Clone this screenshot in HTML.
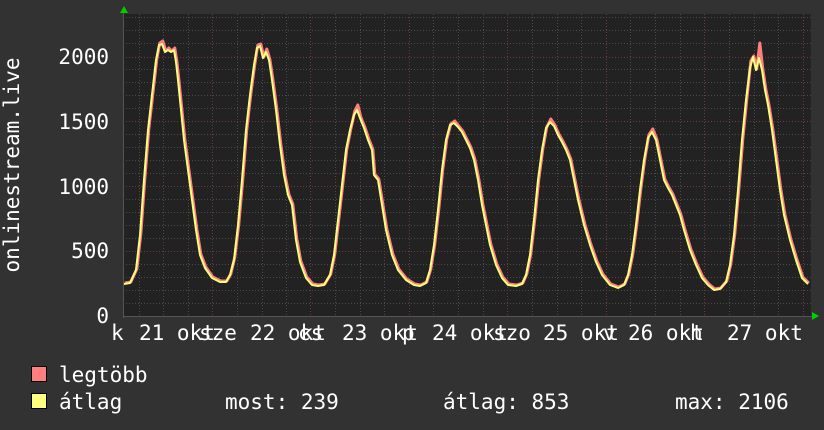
<!DOCTYPE html>
<html><head><meta charset="utf-8"><style>
html,body{margin:0;padding:0;background:#323232;}
svg{display:block}
text{font-family:"DejaVu Sans Mono","Liberation Mono",monospace;fill:#fff;font-size:21px}
</style></head><body>
<svg width="824" height="430" viewBox="0 0 824 430" xmlns="http://www.w3.org/2000/svg">
<rect x="0" y="0" width="824" height="430" fill="#323232"/>
<rect x="123" y="14" width="688" height="303" fill="#222222"/>
<g stroke-width="1" stroke-dasharray="1,2" fill="none">
<g stroke="#4a4a4a">
<path d="M123 303.5H811M123 290.5H811M123 277.5H811M123 264.5H811M123 238.5H811M123 225.5H811M123 212.5H811M123 199.5H811M123 173.5H811M123 160.5H811M123 147.5H811M123 134.5H811M123 108.5H811M123 95.5H811M123 82.5H811M123 69.5H811M123 43.5H811M123 30.5H811M123 17.5H811"/>
<path d="M139.5 14V317M163.5 14V317M188.5 14V317M237.5 14V317M262.5 14V317M286.5 14V317M335.5 14V317M360.5 14V317M384.5 14V317M433.5 14V317M458.5 14V317M483.5 14V317M532.5 14V317M557.5 14V317M581.5 14V317M630.5 14V317M655.5 14V317M680.5 14V317M729.5 14V317M754.5 14V317M778.5 14V317"/>
</g>
<g stroke="#6e3a3a">
<path d="M123 251.5H811M123 186.5H811M123 121.5H811M123 57.5H811"/>
<path d="M212.5 14V317M310.5 14V317M409.5 14V317M507.5 14V317M606.5 14V317M704.5 14V317M803.5 14V317"/>
</g>
</g>
<line x1="123" y1="316.5" x2="812" y2="316.5" stroke="#555"/>
<line x1="123.5" y1="12" x2="123.5" y2="318" stroke="#555"/>
<polygon points="120,13 124,6 128,13" fill="#00cc00"/>
<polygon points="812,312 819,316 812,320" fill="#00cc00"/>
<polyline fill="none" stroke="#ff7f7f" stroke-width="3" stroke-linejoin="round" transform="translate(0.8,-1)" points="124,284 130,283 136,270 140,235 144,180 148,130 152,95 156,60 159,44 162,42 165,52 168,49 171,52 174,49 176,62 178,80 181,110 184,140 188,170 192,200 196,230 200,255 205,268 212,278 220,282 226,282 230,275 234,258 238,225 242,180 246,130 250,95 254,65 257,46 260,45 263,58 266,50 269,60 272,80 276,110 280,145 284,175 288,195 292,205 296,240 300,262 306,278 312,285 318,286 324,285 330,275 334,255 338,220 342,185 346,150 350,130 354,112 357,106 360,118 364,128 368,140 372,150 374,175 378,180 382,205 386,230 392,255 398,270 406,280 414,285 420,286 426,283 430,270 434,245 438,210 442,170 446,140 450,125 454,122 458,127 462,132 466,140 470,148 474,160 478,180 482,205 486,225 490,245 496,265 502,278 508,285 516,286 522,284 526,275 530,255 534,220 538,180 542,150 546,128 550,120 554,126 558,135 562,142 566,150 570,160 574,180 578,200 584,225 590,245 596,262 602,275 610,285 618,288 624,285 628,275 632,255 636,225 640,190 644,160 648,136 652,130 656,140 660,160 664,180 668,188 672,195 676,205 680,215 684,230 690,250 696,265 702,278 708,285 714,290 720,289 726,282 730,265 734,235 738,190 742,140 746,100 750,62 753,57 756,70 759,44 762,70 765,90 768,105 772,130 776,160 780,190 784,215 790,240 796,260 802,278 808,284"/>
<polyline fill="none" stroke="#ffff7f" stroke-width="2" stroke-linejoin="round" points="124,284 130,283 136,270 140,235 144,180 148,130 152,95 156,60 159,45 162,44 165,52 168,50 171,52 174,50 176,62 178,80 181,110 184,140 188,170 192,200 196,230 200,255 205,268 212,278 220,282 226,282 230,275 234,260 238,225 242,180 246,130 250,95 254,65 257,48 260,46 263,58 266,52 269,60 272,80 276,110 280,145 284,175 288,195 292,205 296,240 300,262 306,278 312,285 318,286 324,285 330,275 334,255 338,220 342,185 346,150 350,130 354,115 357,110 360,118 364,128 368,140 372,150 374,175 378,180 382,205 386,230 392,255 398,270 406,280 414,285 420,286 426,283 430,270 434,245 438,210 442,170 446,140 450,125 454,123 458,127 462,132 466,140 470,148 474,160 478,180 482,205 486,225 490,245 496,265 502,278 508,285 516,286 522,284 526,275 530,255 534,220 538,180 542,150 546,128 550,122 554,126 558,135 562,142 566,150 570,160 574,180 578,200 584,225 590,245 596,262 602,275 610,285 618,288 624,285 628,275 632,255 636,225 640,190 644,160 648,138 652,132 656,140 660,160 664,180 668,188 672,195 676,205 680,215 684,230 690,250 696,265 702,278 708,285 714,290 720,289 726,282 730,265 734,235 738,190 742,140 746,100 750,68 753,57 756,70 759,58 762,70 765,90 768,105 772,130 776,160 780,190 784,215 790,240 796,260 802,278 808,284"/>
<g text-anchor="end">
<text x="109" y="64">2000</text>
<text x="109" y="129">1500</text>
<text x="109" y="194">1000</text>
<text x="109" y="258">500</text>
<text x="109" y="323">0</text>
</g>
<text transform="translate(19,165) rotate(-90)" text-anchor="middle">onlinestream.live</text>
<g>
<text x="111" y="340">k</text>
<text x="139" y="340">21 okt</text><text x="199" y="340">sze</text>
<text x="250" y="340">22 okt</text><text x="298" y="340">cs</text>
<text x="342" y="340">23 okt</text><text x="402" y="340">p</text>
<text x="432" y="340">24 okt</text><text x="493" y="340">szo</text>
<text x="543" y="340">25 okt</text><text x="603" y="340">v</text>
<text x="628" y="340">26 okt</text><text x="690" y="340">h</text>
<text x="727" y="340">27 okt</text>
</g>
<rect x="31.5" y="366.5" width="15" height="15" fill="#ff7f7f" stroke="#000"/>
<rect x="31.5" y="393.5" width="15" height="15" fill="#ffff7f" stroke="#000"/>
<text x="59" y="382">legtöbb</text>
<text x="59" y="409">átlag</text>
<text x="225" y="409">most: 239</text>
<text x="443" y="409">átlag: 853</text>
<text x="675" y="409">max: 2106</text>
</svg>
</body></html>
